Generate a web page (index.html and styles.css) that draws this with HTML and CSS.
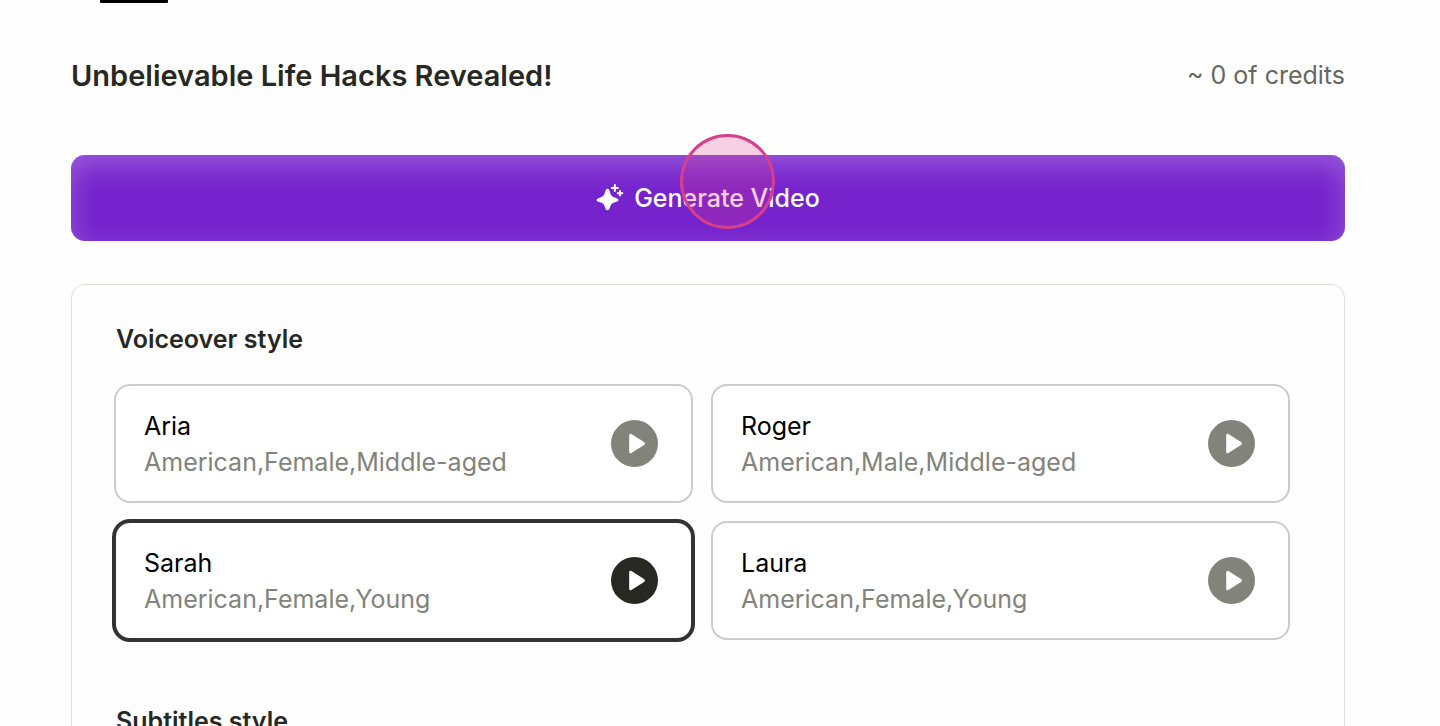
FILE: index.html
```html
<!DOCTYPE html>
<html lang="en">
<head>
    <meta charset="UTF-8">
    <meta name="viewport" content="width=device-width, initial-scale=1.0">
    <title>Generate Video</title>
    <link rel="stylesheet" href="styles.css">
</head>
<body>
    <!-- Shared icons -->
    <svg class="icon-defs" aria-hidden="true">
        <symbol id="play" viewBox="0 0 47 47">
            <path d="M18.200 15.200 V31.800 Q18.200 34.200 20.400 32.900 L33 25 Q35 23.500 33 22 L20.400 14.100 Q18.200 12.800 18.200 15.200 Z" fill="#fff"/>
        </symbol>
    </svg>

    <main class="page">
        <div class="active-tab"></div>

        <div class="header">
            <h1>Unbelievable Life Hacks Revealed!</h1>
            <span class="credits">~ 0 of credits</span>
        </div>

        <div class="generate">
            <button type="button" class="generate-btn">
                <svg class="sparkle" viewBox="0 0 28 28" aria-hidden="true">
                    <path d="M11.500 4.800 Q12.800 4.800 13.300 6.200 L14.700 10.200 Q15.500 12.200 17.500 13 L21.200 14.400 Q22.500 14.900 22.500 15.900 Q22.500 16.900 21.200 17.400 L17.500 18.700 Q15.500 19.500 14.700 21.500 L13.300 25 Q12.800 26.300 11.500 26.300 Q10.200 26.300 9.700 25 L8.300 21.500 Q7.500 19.500 5.500 18.700 L1.800 17.400 Q.5 16.900 .5 15.900 Q.5 14.900 1.800 14.400 L5.500 13 Q7.500 12.200 8.300 10.200 L9.700 6.200 Q10.200 4.800 11.500 4.800 Z" fill="#fff"/>
                    <path d="M18.800 1 V7 M15.800 4 H21.800 M24 7 V11.600 M21.700 9.300 H26.300" stroke="#fff" stroke-width="2" stroke-linecap="round"/>
                </svg>
                Generate Video
            </button>
            <span class="click-marker"></span>
        </div>

        <section class="panel">
            <h2>Voiceover style</h2>
            <div class="voices">
                <div class="voice">
                    <input type="radio" name="voice" id="aria">
                    <label for="aria">
                        <span class="voice-name">Aria</span>
                        <span class="voice-tags">American,Female,Middle-aged</span>
                    </label>
                    <button type="button" class="play-btn" aria-label="Play Aria"><svg><use href="#play"/></svg></button>
                </div>
                <div class="voice">
                    <input type="radio" name="voice" id="roger">
                    <label for="roger">
                        <span class="voice-name">Roger</span>
                        <span class="voice-tags">American,Male,Middle-aged</span>
                    </label>
                    <button type="button" class="play-btn" aria-label="Play Roger"><svg><use href="#play"/></svg></button>
                </div>
                <div class="voice">
                    <input type="radio" name="voice" id="sarah" checked>
                    <label for="sarah">
                        <span class="voice-name">Sarah</span>
                        <span class="voice-tags">American,Female,Young</span>
                    </label>
                    <button type="button" class="play-btn" aria-label="Play Sarah"><svg><use href="#play"/></svg></button>
                </div>
                <div class="voice">
                    <input type="radio" name="voice" id="laura">
                    <label for="laura">
                        <span class="voice-name">Laura</span>
                        <span class="voice-tags">American,Female,Young</span>
                    </label>
                    <button type="button" class="play-btn" aria-label="Play Laura"><svg><use href="#play"/></svg></button>
                </div>
            </div>

            <h2>Subtitles style</h2>
        </section>
    </main>
</body>
</html>
```
FILE: styles.css
```css
* {
    box-sizing: border-box;
}
body {
    margin: 0;
    height: 100vh;
    overflow: hidden;
    background-color: #fefefe;
    color: #272822;
    font-family: Inter, sans-serif;
    font-size: 25px;
    line-height: 36px;
}
h1, h2 {
    margin: 0;
    font-weight: 600;
}
h1 {
    font-size: 29px;
    line-height: 38px;
}
h2 {
    font-size: 25px;
}
button {
    border: none;
    padding: 0;
    font: inherit;
    cursor: pointer;
}
.icon-defs {
    display: none;
}
.page {
    padding: 0 95px 0 71px;
}
.active-tab {
    width: 68px;
    height: 3px;
    margin-left: 29px;
    border-radius: 0 0 1px 1px;
    background-color: #000;
}
.header {
    display: flex;
    justify-content: space-between;
    align-items: flex-start;
    margin: 54px 0 60px;
}
.credits {
    color: #66675f;
}
.generate {
    position: relative;
    margin-bottom: 43px;
}
.generate-btn {
    display: flex;
    justify-content: center;
    align-items: center;
    gap: 10px;
    width: 100%;
    height: 86px;
    border-radius: 14px;
    background-color: #7623cd;
    color: #fff;
    font-weight: 500;
    box-shadow: inset 0 10px 28px rgba(255, 255, 255, 0.25);
}
.sparkle {
    width: 28px;
    height: 28px;
    fill: none;
}
/* Click highlight over the button */
.click-marker {
    position: absolute;
    top: -21px;
    left: calc(50% - 28px);
    width: 95px;
    height: 95px;
    border: 3px solid #d63f8c;
    border-radius: 50%;
    background-color: rgba(220, 60, 140, 0.24);
    pointer-events: none;
}
.panel {
    min-height: 600px;
    padding: 36px 54px 36px 42px;
    border: 1px solid #dfdfd8;
    border-radius: 14px;
}
.panel h2 {
    padding-left: 2px;
}
.voices {
    display: grid;
    grid-template-columns: 1fr 1fr;
    gap: 18px;
    margin: 27px 0 63px;
}
.voice {
    display: flex;
    align-items: center;
    height: 119px;
    padding: 0 33px 0 28px;
    border: 2px solid #cbcbcb;
    border-radius: 16px;
    background-color: #fff;
}
.voice input {
    position: absolute;
    opacity: 0;
}
.voice label {
    flex: 1;
    cursor: pointer;
}
.voice label span {
    display: block;
}
.voice-name {
    color: #000;
}
.voice-tags {
    color: #82837b;
}
.play-btn {
    width: 47px;
    height: 47px;
    border-radius: 50%;
    background-color: #82837b;
}
.play-btn svg {
    display: block;
    width: 47px;
    height: 47px;
}
.voice:has(input:checked) {
    border-color: #333;
    box-shadow: 0 0 0 2px #333;
}
.voice:has(input:checked) .play-btn {
    background-color: #272822;
}
```
